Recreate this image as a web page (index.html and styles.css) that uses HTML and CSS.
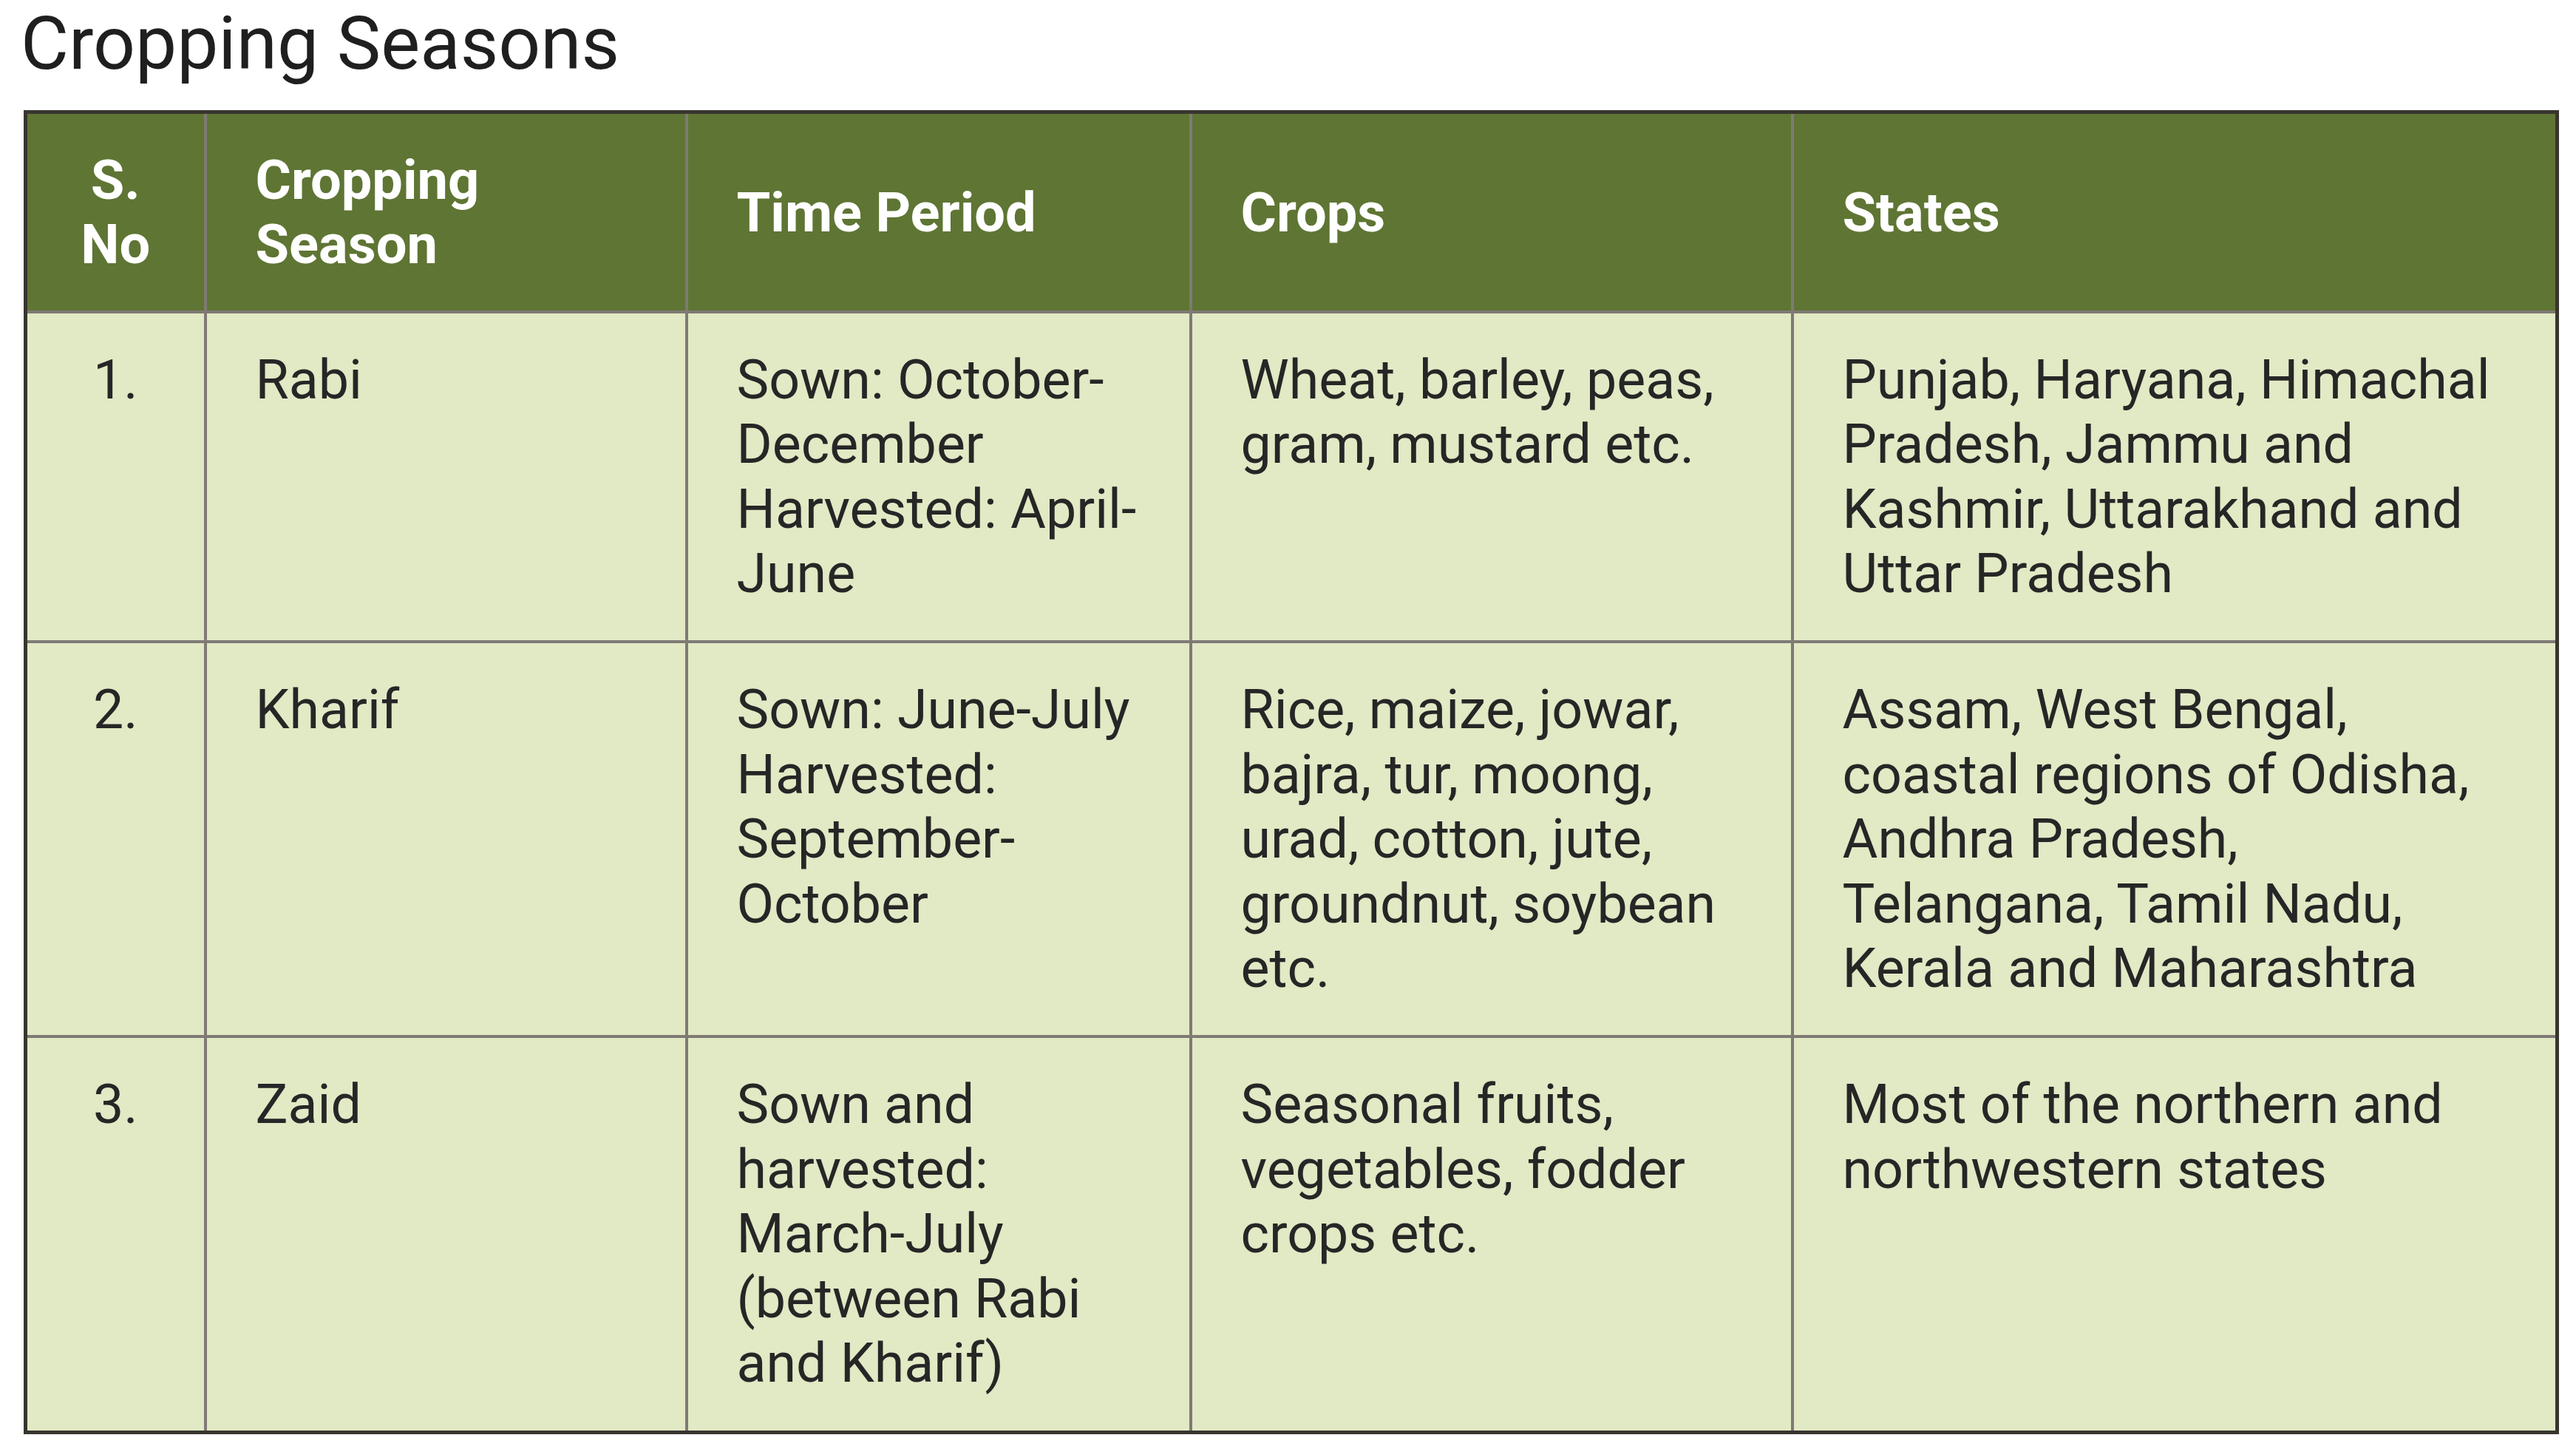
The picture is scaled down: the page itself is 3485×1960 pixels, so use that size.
FILE: index.html
```html
<!DOCTYPE html>
<html lang="en">
<head>
<meta charset="utf-8">
<title>Cropping Seasons</title>
<link rel="stylesheet" href="styles.css">
</head>
<body>
<main class="page">
  <h1 class="title">Cropping Seasons</h1>
  <table class="seasons">
    <colgroup>
      <col class="c-no">
      <col class="c-season">
      <col class="c-period">
      <col class="c-crops">
      <col class="c-states">
    </colgroup>
    <thead>
      <tr>
        <th class="num">S.<br>No</th>
        <th>Cropping<br>Season</th>
        <th>Time Period</th>
        <th>Crops</th>
        <th class="states">States</th>
      </tr>
    </thead>
    <tbody>
      <tr>
        <td class="num">1.</td>
        <td>Rabi</td>
        <td>Sown: October-December Harvested: April-June</td>
        <td>Wheat, barley, peas, gram, mustard etc.</td>
        <td class="states">Punjab, Haryana, Himachal Pradesh, Jammu and Kashmir, Uttarakhand and Uttar Pradesh</td>
      </tr>
      <tr>
        <td class="num">2.</td>
        <td>Kharif</td>
        <td>Sown: June-July Harvested: September-October</td>
        <td>Rice, maize, jowar, bajra, tur, moong, urad, cotton, jute, groundnut, soybean etc.</td>
        <td class="states">Assam, West Bengal, coastal regions of Odisha, Andhra Pradesh, Telangana, Tamil Nadu, Kerala and Maharashtra</td>
      </tr>
      <tr>
        <td class="num">3.</td>
        <td>Zaid</td>
        <td>Sown and harvested: March-July (between Rabi and Kharif)</td>
        <td>Seasonal fruits, vegetables, fodder crops etc.</td>
        <td class="states">Most of the northern and northwestern states</td>
      </tr>
    </tbody>
  </table>
</main>
</body>
</html>
```

FILE: styles.css
```css
html, body {
  margin: 0;
  padding: 0;
  background: #ffffff;
}

.page {
  padding: 0 0 0 32px;
  font-family: Roboto, "Liberation Sans", sans-serif;
  color: #262626;
}

.title {
  margin: 0 0 0 -4px;
  padding: 0;
  font-size: 100px;
  font-weight: 400;
  line-height: 117px;
  height: 149px;
  color: #1f1f1f;
}

.seasons {
  width: 3428px;
  border-collapse: collapse;
  table-layout: fixed;
  border: 5px solid #38352f;
  font-size: 73.5px;
  line-height: 87.4px;
}

.c-no { width: 243px; }
.c-season { width: 651px; }
.c-period { width: 682px; }
.c-crops { width: 814px; }
.c-states { width: 1035px; }

.seasons th,
.seasons td {
  border: 4px solid #7f7a74;
  padding: 46px 40px 45px 66px;
  text-align: left;
  vertical-align: top;
}

.seasons th {
  background: #5f7534;
  color: #ffffff;
  font-weight: 700;
  font-size: 74px;
  vertical-align: middle;
}

.seasons td {
  background: #e1e9c5;
  color: #262626;
  padding-top: 47px;
  padding-bottom: 46px;
}

.seasons .states {
  padding-right: 80px;
}

.seasons .num {
  text-align: center;
  padding-left: 10px;
  padding-right: 10px;
}
```
